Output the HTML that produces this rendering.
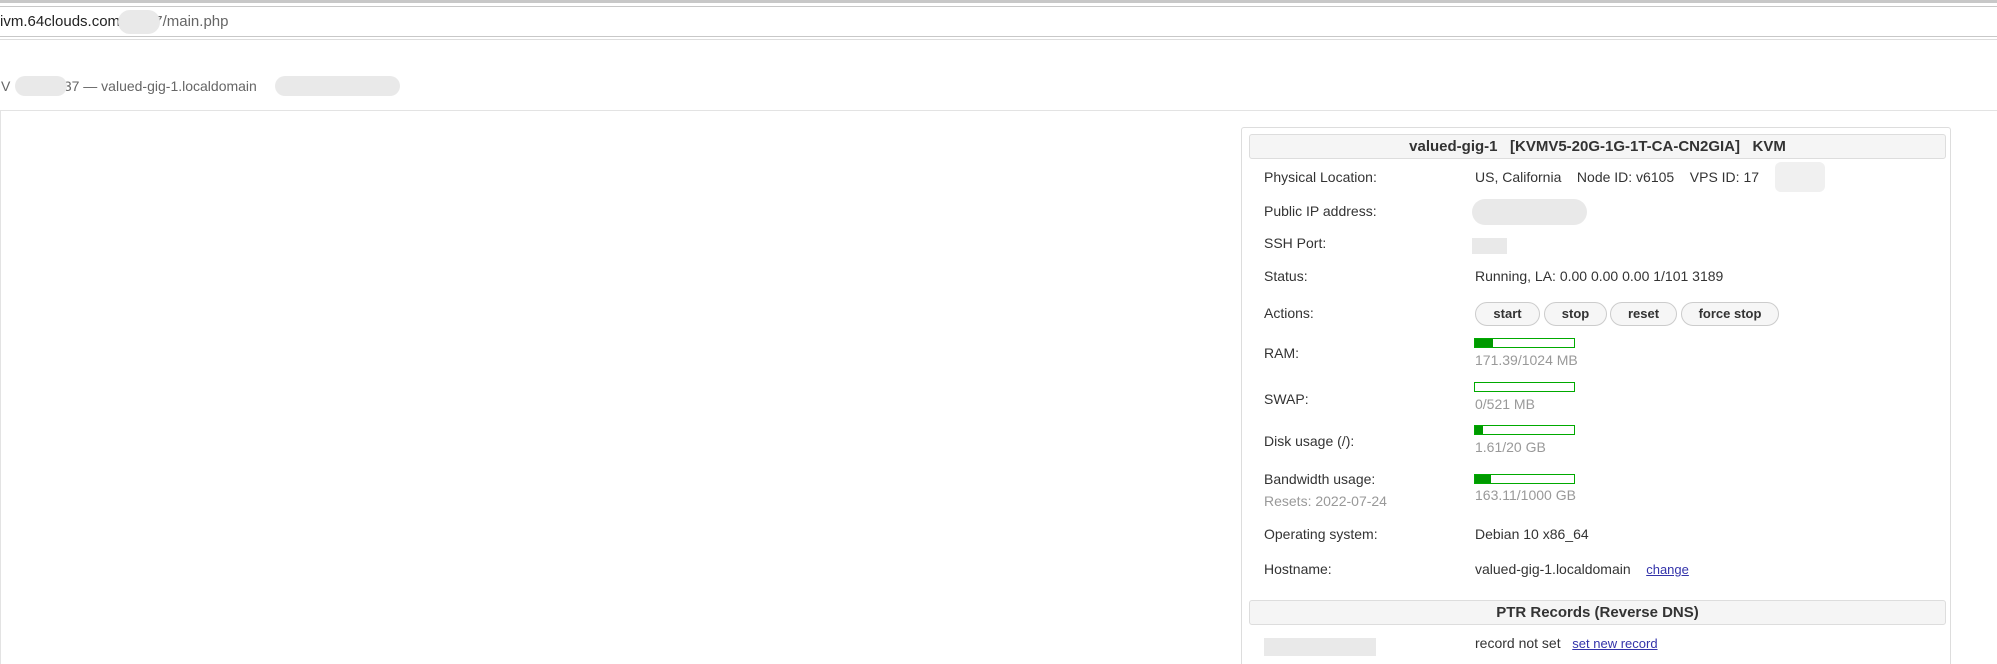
<!DOCTYPE html>
<html style="height:664px;overflow:hidden"><head><meta charset="utf-8"><style>
body{margin:0;width:1997px;height:664px;background:#fff;position:relative;overflow:hidden;font-family:"Liberation Sans",sans-serif;}
.a{position:absolute;white-space:nowrap;}
.l{position:absolute;left:1264px;font-size:14px;color:#333;line-height:16px;}
.v{position:absolute;left:1475px;font-size:14px;color:#333;line-height:16px;}
.g{color:#999;}
.bar{position:absolute;left:1474px;width:99px;height:8px;border:1px solid #0a0;background:#fff;}
.bar i{display:block;height:8px;background:#090;}
.btn{position:absolute;top:302px;height:22px;border:1px solid #ccc;border-radius:12px;background:#f6f6f6;font-weight:bold;font-size:13px;color:#333;text-align:center;line-height:22px;}
.blur{position:absolute;background:#e9e9e9;border-radius:6px;}
a{color:#33a;text-decoration:underline;}
</style></head><body>
<div class="a" style="left:0;top:0;width:1997px;height:3px;background:#c8c8c8"></div>
<div class="a" style="left:0;top:6px;width:1997px;height:29px;border-top:1px solid #c8c8c8;border-bottom:1px solid #c8c8c8"></div>
<div class="a" style="left:0;top:13px;font-size:15px;color:#222">ivm.64clouds.com/<span style="color:#fff">1111</span><span style="color:#666">7/main.php</span></div>
<div class="blur" style="left:118px;top:10px;width:42px;height:24px;border-radius:12px"></div>
<div class="a" style="left:0;top:39px;width:1997px;height:1px;background:#ddd"></div>
<div class="a" style="left:1px;top:78px;font-size:14px;color:#666">V<span style="color:#fff">aaaaaaa</span>37 — valued-gig-1.localdomain</div>
<div class="blur" style="left:15px;top:76px;width:52px;height:20px;border-radius:10px"></div>
<div class="blur" style="left:275px;top:76px;width:125px;height:20px;border-radius:10px"></div>
<div class="a" style="left:0;top:110px;width:1996px;height:553px;border:1px solid #e3e3e3;border-bottom:none"></div>
<div class="a" style="left:1241px;top:127px;width:708px;height:536px;border:1px solid #ddd;border-bottom:none;border-radius:3px 3px 0 0;background:#fff"></div>
<div class="a" style="left:1249px;top:134px;width:695px;height:23px;border:1px solid #ddd;border-radius:3px;background:#f5f5f5;text-align:center;font-weight:bold;font-size:15px;line-height:23px;color:#333">valued-gig-1 &nbsp; [KVMV5-20G-1G-1T-CA-CN2GIA] &nbsp; KVM</div>
<div class="l" style="top:169px">Physical Location:</div><div class="v" style="top:169px">US, California &nbsp;&nbsp; Node ID: v6105 &nbsp;&nbsp; VPS ID: 17</div>
<div class="blur" style="left:1775px;top:162px;width:50px;height:30px;background:#f0f0f0"></div>
<div class="l" style="top:203px">Public IP address:</div><div class="blur" style="left:1472px;top:199px;width:115px;height:26px;border-radius:13px"></div>
<div class="l" style="top:235px">SSH Port:</div><div class="blur" style="left:1472px;top:238px;width:35px;height:16px;border-radius:0"></div>
<div class="l" style="top:268px">Status:</div><div class="v" style="top:268px">Running, LA: 0.00 0.00 0.00 1/101 3189</div>
<div class="l" style="top:305px">Actions:</div>
<div class="btn" style="left:1475px;width:63px">start</div>
<div class="btn" style="left:1544px;width:61px">stop</div>
<div class="btn" style="left:1610px;width:65px">reset</div>
<div class="btn" style="left:1681px;width:96px">force stop</div>
<div class="l" style="top:345px">RAM:</div><div class="bar" style="top:338px"><i style="width:18px"></i></div><div class="v g" style="top:352px">171.39/1024 MB</div>
<div class="l" style="top:391px">SWAP:</div><div class="bar" style="top:382px"><i style="width:0"></i></div><div class="v g" style="top:396px">0/521 MB</div>
<div class="l" style="top:433px">Disk usage (/):</div><div class="bar" style="top:425px"><i style="width:8px"></i></div><div class="v g" style="top:439px">1.61/20 GB</div>
<div class="l" style="top:471px">Bandwidth usage:</div><div class="l g" style="top:493px">Resets: 2022-07-24</div><div class="bar" style="top:474px"><i style="width:16px"></i></div><div class="v g" style="top:487px">163.11/1000 GB</div>
<div class="l" style="top:526px">Operating system:</div><div class="v" style="top:526px">Debian 10 x86_64</div>
<div class="l" style="top:561px">Hostname:</div><div class="v" style="top:561px">valued-gig-1.localdomain &nbsp;&nbsp; <a style="font-size:13px">change</a></div>
<div class="a" style="left:1249px;top:600px;width:695px;height:23px;border:1px solid #ddd;border-radius:3px;background:#f5f5f5;text-align:center;font-weight:bold;font-size:15px;line-height:23px;color:#333">PTR Records (Reverse DNS)</div>
<div class="blur" style="left:1264px;top:638px;width:112px;height:18px;border-radius:0"></div>
<div class="v" style="top:635px">record not set &nbsp; <a style="font-size:13px">set new record</a></div>
</body></html>
